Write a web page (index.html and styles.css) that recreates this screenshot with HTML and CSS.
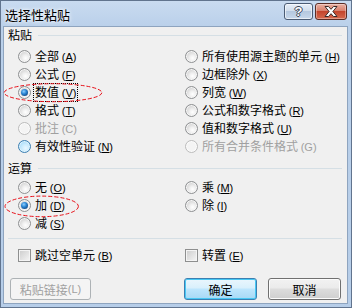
FILE: index.html
```html
<!DOCTYPE html>
<html lang="zh-CN">
<head>
<meta charset="utf-8">
<title>选择性粘贴</title>
<link rel="stylesheet" href="styles.css">
</head>
<body>
<div class="window">
  <div class="titlebar">
    <span class="title">选择性粘贴</span>
    <div class="caps">
      <div class="cap help"><span class="q">?</span></div>
      <div class="cap close">
        <svg width="14" height="11" viewBox="0 0 14 11"><polygon points="1,0.5 4.5,0.5 7,3.3 9.5,0.5 13,0.5 8.9,5.5 13,10.5 9.5,10.5 7,7.7 4.5,10.5 1,10.5 5.1,5.5" fill="#fff" stroke="#3b2a28" stroke-width="1" stroke-linejoin="round"/></svg>
      </div>
    </div>
  </div>
  <div class="client">
    <div class="group-head"><span>粘贴</span><i class="rule"></i></div>
    <div class="grid paste">
      <div class="opt"><i class="radio"></i><span class="lbl">全部 <span class="mn">(<u>A</u>)</span></span></div>
      <div class="opt"><i class="radio"></i><span class="lbl">所有使用源主题的单元 <span class="mn">(<u>H</u>)</span></span></div>
      <div class="opt"><i class="radio"></i><span class="lbl">公式 <span class="mn">(<u>F</u>)</span></span></div>
      <div class="opt"><i class="radio"></i><span class="lbl">边框除外 <span class="mn">(<u>X</u>)</span></span></div>
      <div class="opt"><i class="radio checked"></i><span class="lbl focus">数值 <span class="mn">(<u>V</u>)</span></span></div>
      <div class="opt"><i class="radio"></i><span class="lbl">列宽 <span class="mn">(<u>W</u>)</span></span></div>
      <div class="opt"><i class="radio"></i><span class="lbl">格式 <span class="mn">(<u>T</u>)</span></span></div>
      <div class="opt"><i class="radio"></i><span class="lbl">公式和数字格式 <span class="mn">(<u>R</u>)</span></span></div>
      <div class="opt disabled"><i class="radio"></i><span class="lbl">批注 <span class="mn">(C)</span></span></div>
      <div class="opt"><i class="radio"></i><span class="lbl">值和数字格式 <span class="mn">(<u>U</u>)</span></span></div>
      <div class="opt"><i class="radio hover"></i><span class="lbl">有效性验证 <span class="mn">(<u>N</u>)</span></span></div>
      <div class="opt disabled"><i class="radio"></i><span class="lbl">所有合并条件格式 <span class="mn">(G)</span></span></div>
    </div>
    <div class="group-head ops-head"><span>运算</span><i class="rule"></i></div>
    <div class="grid ops">
      <div class="opt"><i class="radio"></i><span class="lbl">无 <span class="mn">(<u>O</u>)</span></span></div>
      <div class="opt"><i class="radio"></i><span class="lbl">乘 <span class="mn">(<u>M</u>)</span></span></div>
      <div class="opt"><i class="radio checked"></i><span class="lbl">加 <span class="mn">(<u>D</u>)</span></span></div>
      <div class="opt"><i class="radio"></i><span class="lbl">除 <span class="mn">(<u>I</u>)</span></span></div>
      <div class="opt"><i class="radio"></i><span class="lbl">减 <span class="mn">(<u>S</u>)</span></span></div>
      <div></div>
    </div>
    <div class="sep"></div>
    <div class="grid checks">
      <div class="opt"><i class="check"></i><span class="lbl">跳过空单元 <span class="mn">(<u>B</u>)</span></span></div>
      <div class="opt"><i class="check"></i><span class="lbl">转置 <span class="mn">(<u>E</u>)</span></span></div>
    </div>
    <div class="buttons">
      <div class="btn link disabled">粘贴链接 <span class="mn">(L)</span></div>
      <div class="btn ok">确定</div>
      <div class="btn cancel">取消</div>
    </div>
  </div>
  <svg class="annot" width="352" height="308" viewBox="0 0 352 308">
    <ellipse cx="53" cy="92.7" rx="48.8" ry="9" fill="none" stroke="#e8121b" stroke-width="1" stroke-dasharray="4 2"/>
    <ellipse cx="41.7" cy="206.4" rx="36.7" ry="10.3" fill="none" stroke="#e8121b" stroke-width="1" stroke-dasharray="4 2"/>
  </svg>
</div>
</body>
</html>
```
FILE: styles.css
```css
* { box-sizing: border-box; }
html, body { margin: 0; padding: 0; }
body {
  width: 352px;
  height: 308px;
  overflow: hidden;
  font-family: "Noto Sans CJK SC", "Noto Sans", sans-serif;
  font-size: 12px;
  color: #000;
  background: #b9d0e9;
}
.window {
  position: relative;
  width: 352px;
  height: 308px;
  border: 1px solid #61748e;
  background: linear-gradient(#c9dbf0, #bad0ea 26px, #b6cde8);
  padding: 0 3px 3px 2px;
  display: flex;
  flex-direction: column;
}
.titlebar {
  height: 25px;
  display: flex;
  align-items: flex-start;
}
.title {
  margin: 6px 0 0 2px;
  font-size: 13px;
  line-height: 15px;
  color: #000;
  text-shadow: 0 0 5px #fff, 0 0 3px rgba(255,255,255,0.9);
}
.caps {
  margin: 2px 1px 0 auto;
  display: flex;
  gap: 2px;
}
.cap {
  height: 17px;
  border: 1px solid #4b5c74;
  border-radius: 3px;
  display: flex;
  align-items: center;
  justify-content: center;
}
.help {
  width: 29px;
  background: linear-gradient(#e6eef8 0%, #d2deec 45%, #b5c8df 50%, #c8d8eb 100%);
  box-shadow: inset 0 0 0 1px rgba(255,255,255,0.6);
}
.help .q {
  font-family: "Liberation Sans", sans-serif;
  font-weight: bold;
  font-size: 13px;
  line-height: 13px;
  color: #fff;
  text-shadow: -1px 0 #3a4556, 1px 0 #3a4556, 0 -1px #3a4556, 0 1px #3a4556;
}
.close {
  width: 32px;
  border-color: #5b2d25;
  background: linear-gradient(#eab0a2 0%, #d9806c 45%, #c4452c 50%, #d5694e 100%);
  box-shadow: inset 0 0 0 1px rgba(255,255,255,0.35);
}
.close svg { display: block; }
.client {
  height: 278px;
  background: #f0f0f0;
  border: 1px solid #8ea4bf;
  padding: 0 4px;
  display: flex;
  flex-direction: column;
}
.group-head {
  display: flex;
  align-items: center;
  height: 16px;
  line-height: 16px;
}
.group-head .rule {
  flex: 1;
  height: 1px;
  background: #d5dfe5;
  margin: 0 1px 0 6px;
}
.ops-head { margin-top: 5px; }
.grid {
  display: grid;
  grid-template-columns: 167px 1fr;
  grid-auto-rows: 18px;
  margin-left: 10px;
}
.paste { margin-top: 4px; }
.ops { margin-top: 2px; }
.sep {
  height: 1px;
  background: #d5dfe5;
  margin: 6px 1px 0 0;
}
.checks { margin-top: 7px; }
.opt {
  display: flex;
  align-items: center;
  gap: 3px;
  white-space: nowrap;
}
.lbl {
  padding: 0 1px;
  line-height: 15px;
}
.mn {
  font-family: "Liberation Sans", sans-serif;
  font-size: 11px;
}
.mn u { text-decoration-thickness: 1px; text-underline-offset: 1px; }
.focus { outline: 1px dotted #000; }
.disabled .lbl, .btn.disabled { color: #a0a0a0; }
.radio {
  position: relative;
  flex: none;
  width: 13px;
  height: 13px;
  border-radius: 50%;
  border: 1px solid #8e9092;
  background: radial-gradient(circle at 60% 65%, #ffffff 0, #f0f0f0 30%, #d4d4d4 70%, #c2c2c2 100%);
  box-shadow: inset 0 0 0 1px #f6f6f6;
}
.radio.checked::after {
  content: "";
  position: absolute;
  left: 2px;
  top: 2px;
  width: 7px;
  height: 7px;
  border-radius: 50%;
  background: radial-gradient(circle at 40% 35%, #8fd0ff 0, #2a86d4 40%, #15508f 75%, #0d3a6e 100%);
}
.radio.hover {
  border-color: #3c7fb1;
  background: radial-gradient(circle at 60% 65%, #eaf7ff 0, #c9ebfd 40%, #8fd0f6 100%);
  box-shadow: inset 0 0 0 1px #def3fe;
}
.disabled .radio {
  border-color: #bcbcbc;
  background: #f4f4f4;
  box-shadow: inset 0 0 0 1px #fbfbfb;
}
.check {
  flex: none;
  width: 13px;
  height: 13px;
  border: 1px solid #8e8f8f;
  background: linear-gradient(135deg, #cbcbcb, #f6f6f6);
  box-shadow: inset 0 0 0 1px #f4f4f4;
}
.buttons {
  display: flex;
  margin-top: 14px;
  padding: 0 2px;
}
.btn {
  height: 22px;
  display: flex;
  align-items: center;
  justify-content: center;
  border: 1px solid #707070;
  border-radius: 3px;
  background: linear-gradient(#f2f2f2 0%, #ebebeb 45%, #dddddd 50%, #cfcfcf 100%);
  box-shadow: inset 0 0 0 1px #fcfcfc;
  white-space: nowrap;
}
.btn.link {
  width: 81px;
  border-color: #adb2b5;
  background: #f4f4f4;
  box-shadow: none;
}
.btn.ok {
  width: 73px;
  margin-left: auto;
  border-color: #3c7fb1;
  background: linear-gradient(#eaf6fd 0%, #d9f0fc 45%, #bee6fd 50%, #a7d9f5 100%);
  box-shadow: inset 0 0 0 1px #48c8f4;
}
.btn.cancel {
  width: 73px;
  margin-left: 11px;
}
.annot {
  position: absolute;
  left: -1px;
  top: -1px;
  pointer-events: none;
}
```
